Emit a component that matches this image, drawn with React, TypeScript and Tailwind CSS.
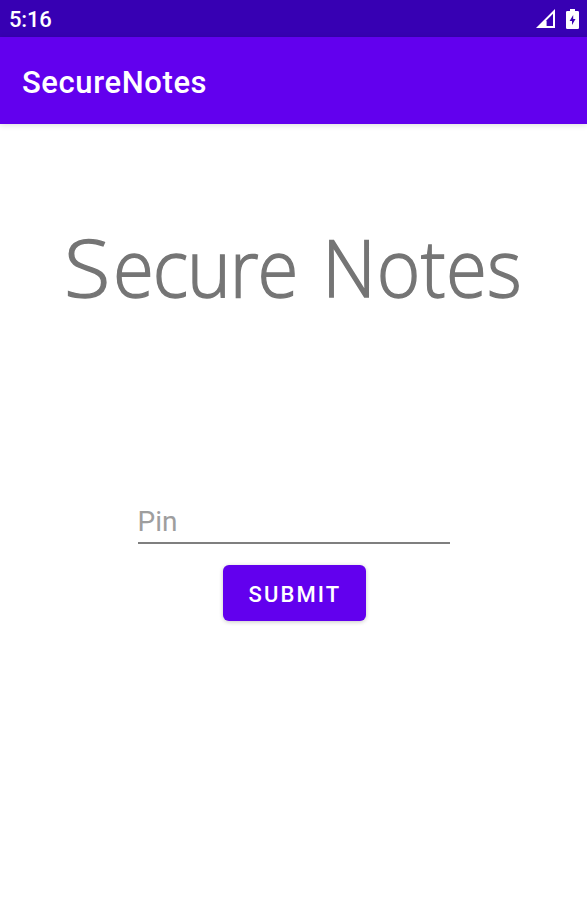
function StatusIcons() {
  return (
    <div className="flex items-center gap-[11px]">
      <svg width="19" height="19" viewBox="0 0 19 19" fill="none">
        <path d="M0 19 19 0V19Z" fill="white" />
        <path d="M10.6 11.2 17 4.8V17H10.6Z" fill="#3700b3" />
      </svg>
      <svg width="13" height="20" viewBox="0 0 13 20">
        <path d="M4 0H9V2H11.7Q13 2 13 3.3V18.7Q13 20 11.7 20H1.3Q0 20 0 18.7V3.3Q0 2 1.3 2H4Z" fill="white" />
        <path d="M7.2 6 3.6 12H6V16L9.5 10H7.2Z" fill="#3700b3" />
      </svg>
    </div>
  );
}

export default function App() {
  return (
    <div className="flex h-[914px] w-[587px] flex-col overflow-hidden bg-white font-['Roboto',sans-serif]">
      <div className="flex h-[37px] shrink-0 items-center justify-between bg-[#3700b3] pl-[9px] pr-[8px] text-white">
        <span className="pt-[2px] text-[22px] font-medium leading-none tracking-[-0.2px]">5:16</span>
        <StatusIcons />
      </div>
      <header className="flex h-[87px] shrink-0 items-center bg-[#6200ee] pl-[22px] pt-[4px] text-white shadow-[0_1px_6px_rgba(0,0,0,0.14)]">
        <h1 className="text-[31px] font-medium leading-none tracking-[0.6px]">SecureNotes</h1>
      </header>
      <main className="flex flex-col items-center">
        <h2 className="mt-[92px] flex h-[100px] w-[587px] items-center whitespace-nowrap pl-[64px] font-['Open_Sans',sans-serif] text-[80px] font-light leading-[100px] text-[#757575] [-webkit-text-stroke:1.4px_#757575]">
          <span className="origin-left scale-x-[0.93]">
            <span className="inline-block origin-left scale-x-[1.14]">S</span>
            <span className="ml-[9px] tracking-[-1.2px]">ecure</span>
            <span className="ml-[6px]"> N</span>
            <span className="ml-[1px] tracking-[0.3px]">otes</span>
          </span>
        </h2>
        <input
          type="text"
          placeholder="Pin"
          className="mt-[182px] h-[46px] w-[312px] border-b-2 border-[#7f7f7f] bg-transparent pt-[2px] text-[28px] text-[#757575] outline-none placeholder:text-[#9e9e9e]"
        />
        <button className="ml-px mt-[21px] h-[56px] w-[143px] rounded-[6px] bg-[#6200ee] pl-[2px] pt-[2px] text-[22px] font-medium tracking-[2.1px] text-white shadow-[0_1px_4px_rgba(0,0,0,0.22)]">
          SUBMIT
        </button>
      </main>
    </div>
  );
}
